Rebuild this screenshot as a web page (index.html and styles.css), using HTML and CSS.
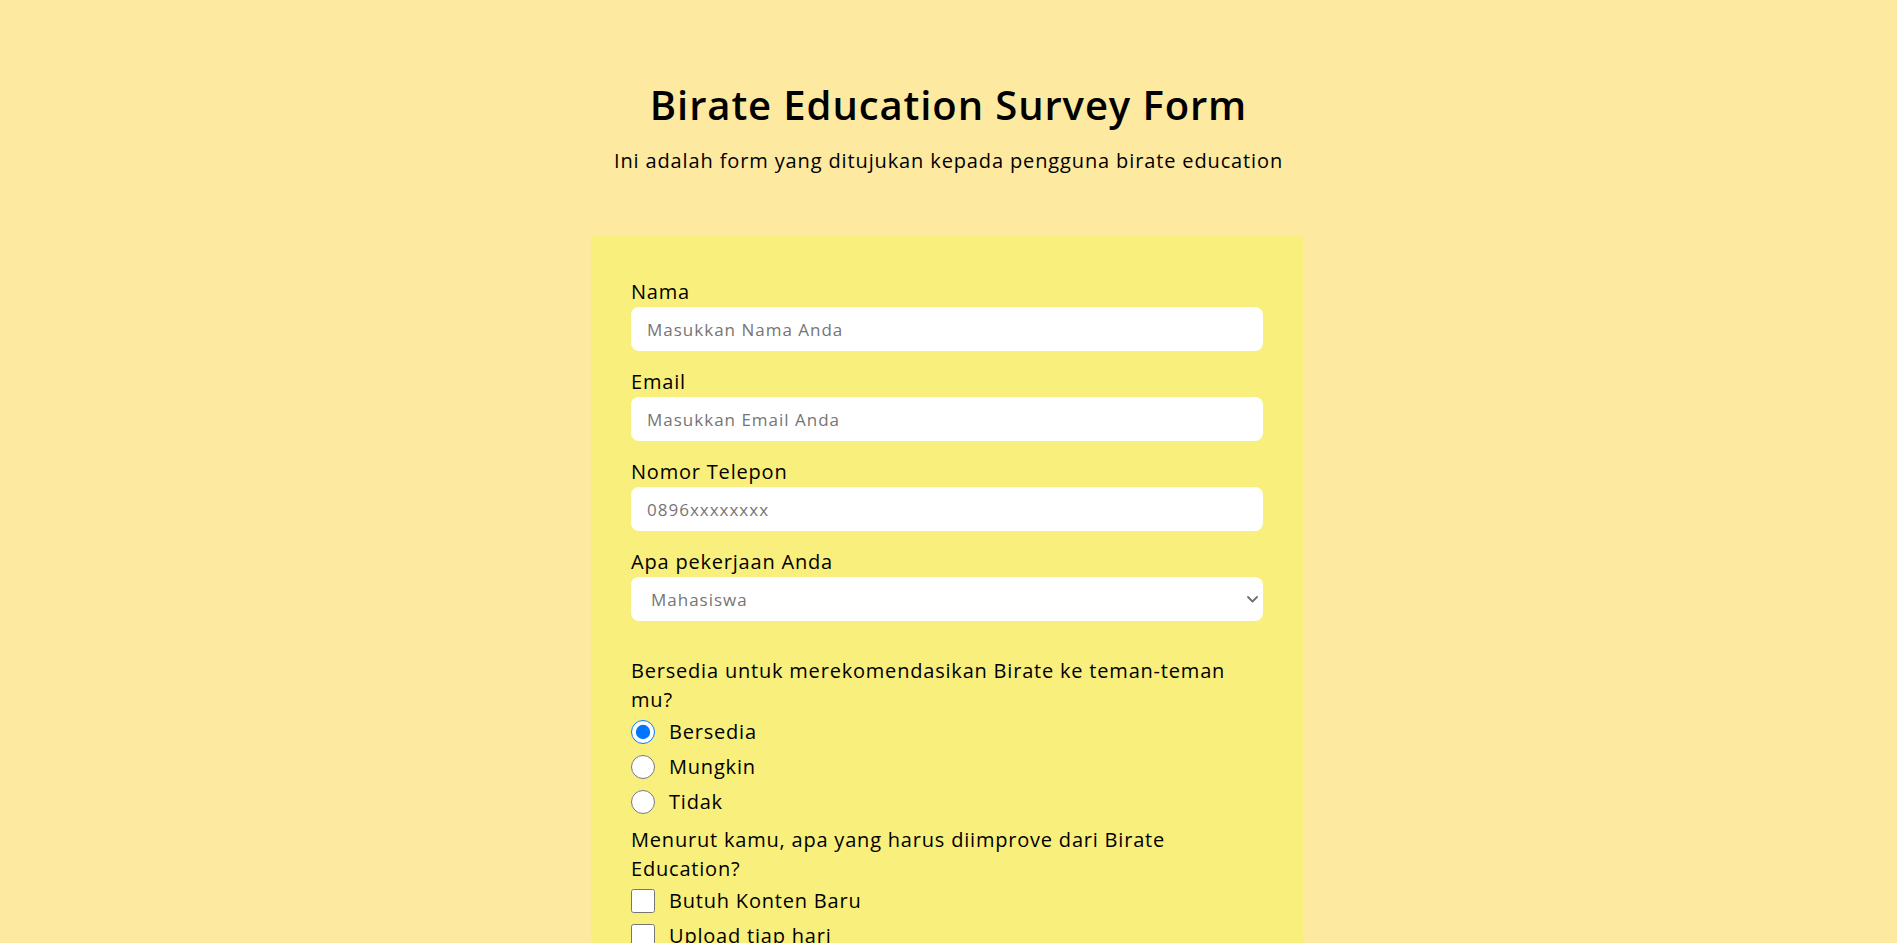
FILE: index.html
```html
<!DOCTYPE html>
<html lang="id">
<head>
<meta charset="utf-8">
<title>Birate Education Survey Form</title>
<link rel="stylesheet" href="styles.css">
</head>
<body>
<header class="header">
  <h1 class="title">Birate Education Survey Form</h1>
  <p class="subtitle">Ini adalah form yang ditujukan kepada pengguna birate education</p>
</header>
<main class="panel">
  <form class="form">
    <div class="field">
      <label class="label" for="nama">Nama</label>
      <input class="control" id="nama" type="text" placeholder="Masukkan Nama Anda">
    </div>
    <div class="field">
      <label class="label" for="email">Email</label>
      <input class="control" id="email" type="email" placeholder="Masukkan Email Anda">
    </div>
    <div class="field">
      <label class="label" for="tel">Nomor Telepon</label>
      <input class="control" id="tel" type="tel" placeholder="0896xxxxxxxx">
    </div>
    <div class="field field-last">
      <label class="label" for="job">Apa pekerjaan Anda</label>
      <div class="select-wrap">
        <select class="control select" id="job">
          <option>Mahasiswa</option>
          <option>Pelajar</option>
          <option>Pekerja</option>
        </select>
        <svg class="chevron" width="11" height="7" viewBox="0 0 11 7" aria-hidden="true"><path d="M1 1 L5.5 5.5 L10 1" fill="none" stroke="#6f6f6f" stroke-width="1.8" stroke-linecap="round" stroke-linejoin="round"/></svg>
      </div>
    </div>
    <div class="group">
      <p class="question">Bersedia untuk merekomendasikan Birate ke teman-teman mu?</p>
      <label class="option"><input class="radio" type="radio" name="rek" checked><span>Bersedia</span></label>
      <label class="option"><input class="radio" type="radio" name="rek"><span>Mungkin</span></label>
      <label class="option"><input class="radio" type="radio" name="rek"><span>Tidak</span></label>
    </div>
    <div class="group">
      <p class="question">Menurut kamu, apa yang harus diimprove dari Birate Education?</p>
      <label class="option"><input class="check" type="checkbox"><span>Butuh Konten Baru</span></label>
      <label class="option"><input class="check" type="checkbox"><span>Upload tiap hari</span></label>
      <label class="option"><input class="check" type="checkbox"><span>Tambah fitur kuis</span></label>
    </div>
    <div class="field">
      <label class="label" for="saran">Saran</label>
      <textarea class="control area" id="saran" placeholder="Tulis saran Anda"></textarea>
    </div>
    <button class="submit" type="submit">Kirim</button>
  </form>
</main>
</body>
</html>
```
FILE: styles.css
```css
* { box-sizing: border-box; }

body {
  margin: 0;
  background: #fee9a0;
  color: #000;
  font-family: "Open Sans", "Noto Sans", sans-serif;
}

.header {
  text-align: center;
  padding-top: 81px;
}

.title {
  margin: 0;
  font-size: 40px;
  line-height: 48px;
  font-weight: 600;
  letter-spacing: 0.9px;
}

.subtitle {
  margin: 17px 0 0;
  font-size: 20px;
  line-height: 30px;
  letter-spacing: 0.87px;
}

.panel {
  width: 712px;
  margin: 60px auto 60px calc(50% - 357.5px);
  padding: 41px 40px 40px;
  background: #f9ef7c;
  border-radius: 4px;
}

.form { margin: 0; }

.field { margin-bottom: 16px; }
.field-last { margin-bottom: 35px; }

.label {
  display: block;
  font-size: 20px;
  line-height: 29px;
  letter-spacing: 0.8px;
  margin-bottom: 1px;
}

.control {
  display: block;
  width: 100%;
  height: 44px;
  border: none;
  border-radius: 8px;
  background: #fff;
  padding: 0 16px;
  font-family: inherit;
  font-size: 17px;
  letter-spacing: 1px;
  color: #000;
  outline: none;
}

.control::placeholder { color: #757575; }

.select-wrap { position: relative; }

.select {
  appearance: none;
  -webkit-appearance: none;
  color: #757575;
  padding: 0 24px 0 20px;
}

.chevron {
  position: absolute;
  right: 5px;
  top: 19px;
  pointer-events: none;
}

.area {
  height: 120px;
  padding-top: 10px;
  resize: vertical;
}

.group { margin-bottom: 6px; }

.question {
  margin: 0;
  max-width: 628px;
  font-size: 20px;
  line-height: 29px;
  letter-spacing: 0.8px;
}

.option {
  display: flex;
  align-items: center;
  gap: 14px;
  height: 35px;
  font-size: 20px;
  letter-spacing: 0.8px;
}

.radio,
.check {
  width: 24px;
  height: 24px;
  margin: 0;
  flex: none;
}

.submit {
  display: block;
  width: 100%;
  height: 48px;
  margin-top: 10px;
  border: none;
  border-radius: 8px;
  background: #000;
  color: #fff;
  font-family: inherit;
  font-size: 18px;
}
```
